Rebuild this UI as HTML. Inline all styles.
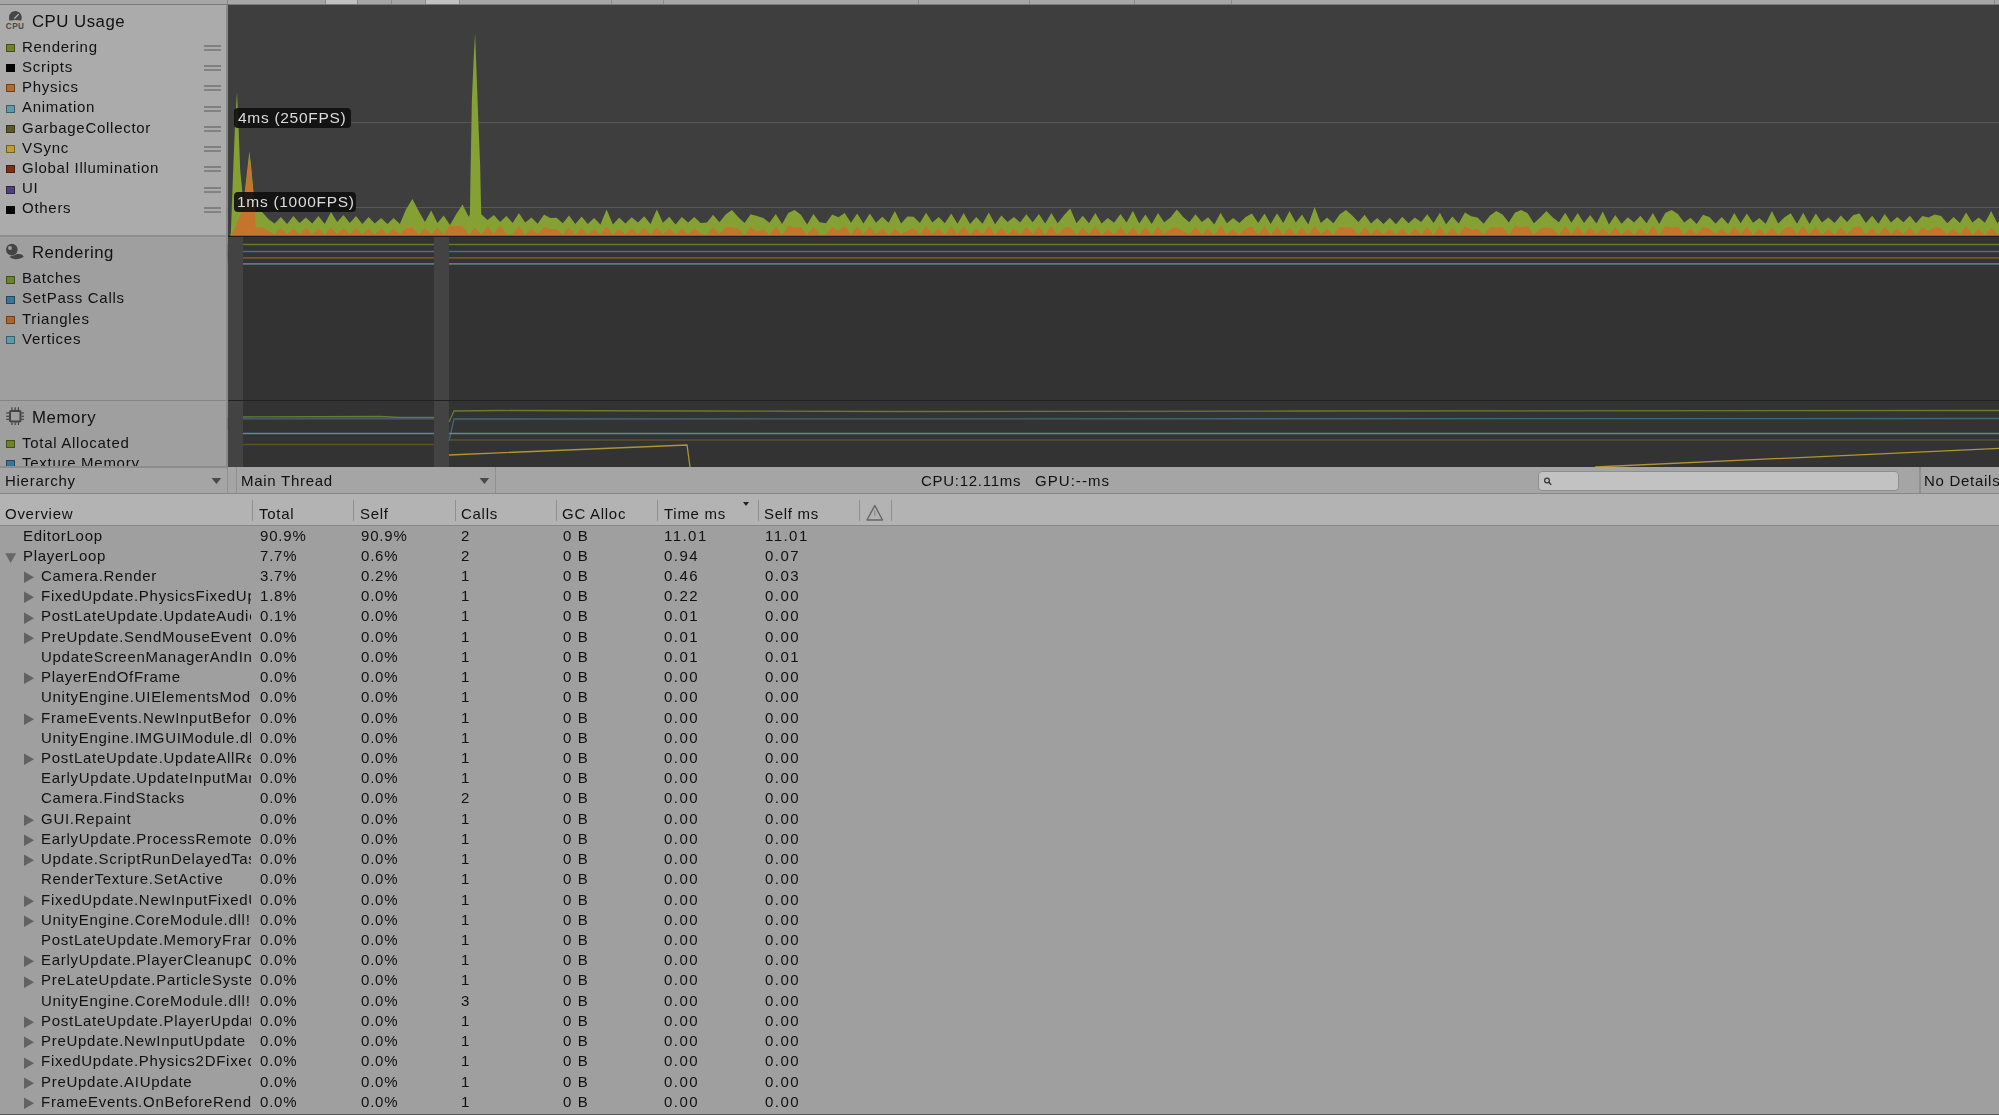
<!DOCTYPE html>
<html><head><meta charset="utf-8"><style>
html,body{margin:0;padding:0;}
body{width:1999px;height:1115px;overflow:hidden;position:relative;background:#9f9f9f;font-family:"Liberation Sans",sans-serif;}
.t{position:absolute;white-space:nowrap;line-height:20px;will-change:transform;}
</style></head><body>
<div style="position:absolute;left:0;top:0;width:1999px;height:4px;background:#a6a6a6"></div>
<div style="position:absolute;left:325px;top:0;width:32px;height:4px;background:#c2c2c2"></div>
<div style="position:absolute;left:425px;top:0;width:34px;height:4px;background:#c2c2c2"></div>
<div style="position:absolute;left:227px;top:0;width:1px;height:4px;background:#8a8a8a"></div>
<div style="position:absolute;left:325px;top:0;width:1px;height:4px;background:#8a8a8a"></div>
<div style="position:absolute;left:357px;top:0;width:1px;height:4px;background:#8a8a8a"></div>
<div style="position:absolute;left:391px;top:0;width:1px;height:4px;background:#8a8a8a"></div>
<div style="position:absolute;left:425px;top:0;width:1px;height:4px;background:#8a8a8a"></div>
<div style="position:absolute;left:459px;top:0;width:1px;height:4px;background:#8a8a8a"></div>
<div style="position:absolute;left:611px;top:0;width:1px;height:4px;background:#8a8a8a"></div>
<div style="position:absolute;left:663px;top:0;width:1px;height:4px;background:#8a8a8a"></div>
<div style="position:absolute;left:918px;top:0;width:1px;height:4px;background:#8a8a8a"></div>
<div style="position:absolute;left:1029px;top:0;width:1px;height:4px;background:#8a8a8a"></div>
<div style="position:absolute;left:1134px;top:0;width:1px;height:4px;background:#8a8a8a"></div>
<div style="position:absolute;left:1231px;top:0;width:1px;height:4px;background:#8a8a8a"></div>
<div style="position:absolute;left:1994px;top:0;width:1px;height:4px;background:#8a8a8a"></div>
<div style="position:absolute;left:0;top:4px;width:1999px;height:1px;background:#7a7a7a"></div>
<div style="position:absolute;left:0;top:5px;width:227px;height:231px;background:#ababab"></div>
<div style="position:absolute;left:0;top:235px;width:227px;height:2px;background:#8e8e8e"></div>
<div style="position:absolute;left:0;top:237px;width:227px;height:163px;background:#9f9f9f"></div>
<div style="position:absolute;left:0;top:400px;width:227px;height:1px;background:#858585"></div>
<div style="position:absolute;left:0;top:401px;width:227px;height:66px;background:#9f9f9f"></div>
<div style="position:absolute;left:226px;top:5px;width:2px;height:462px;background:#8a8a8a"></div>
<svg style="position:absolute;left:0;top:0px" width="30" height="30" viewBox="0 0 30 30">
<path d="M9.6 16.2 A6.2 6.2 0 0 1 21.4 16.2 Q21.6 18.2 21 20.6 Q15.3 19.6 9.6 20.6 Q9 18.2 9.6 16.2 Z" fill="#464646"/>
<path d="M9.1 17.2 A6.2 6.2 0 0 1 21.5 17.2 L21.3 20.3 Q15.3 19.2 9.3 20.3 Z" fill="#464646"/>
<line x1="14.7" y1="18.3" x2="18.4" y2="14.4" stroke="#b0b0b0" stroke-width="1.3" stroke-linecap="round"/>
<text x="15.1" y="28.7" font-family="Liberation Sans" font-weight="bold" font-size="8.2" fill="#484848" text-anchor="middle" letter-spacing="0.4">CPU</text>
</svg>
<svg style="position:absolute;left:0;top:238px" width="30" height="30" viewBox="0 0 30 30">
<circle cx="11.8" cy="11.6" r="5.8" fill="#444"/>
<circle cx="10" cy="10" r="2" fill="#9c9c9c"/>
<path d="M9.2 18.8 Q14 17.6 17 16.1 Q22.6 15.4 23.8 18.8 Q20 21.6 15 21.2 Q11 20.7 9.2 18.8 Z" fill="#444"/>
</svg>
<svg style="position:absolute;left:0;top:400px" width="30" height="30" viewBox="0 0 30 30">
<rect x="10" y="11" width="10.5" height="10.5" rx="1" fill="none" stroke="#444" stroke-width="2"/>
<g stroke="#444" stroke-width="1.2">
<line x1="12" y1="7.2" x2="12" y2="10"/><line x1="15.2" y1="7.2" x2="15.2" y2="10"/><line x1="18.4" y1="7.2" x2="18.4" y2="10"/>
<line x1="12" y1="22.5" x2="12" y2="25"/><line x1="15.2" y1="22.5" x2="15.2" y2="25"/><line x1="18.4" y1="22.5" x2="18.4" y2="25"/>
<line x1="6.2" y1="13" x2="9" y2="13"/><line x1="6.2" y1="16.3" x2="9" y2="16.3"/><line x1="6.2" y1="19.3" x2="9" y2="19.3"/>
<line x1="21.5" y1="13" x2="24" y2="13"/><line x1="21.5" y1="16.3" x2="24" y2="16.3"/><line x1="21.5" y1="19.3" x2="24" y2="19.3"/>
</g></svg>
<div class="t" style="left:31.5px;top:12.08px;font-size:16.8px;letter-spacing:0.5px;color:#111;">CPU Usage</div>
<div class="t" style="left:31.5px;top:243.38px;font-size:16.8px;letter-spacing:0.5px;color:#111;">Rendering</div>
<div class="t" style="left:31.5px;top:407.78px;font-size:16.8px;letter-spacing:0.6px;color:#111;">Memory</div>
<div style="position:absolute;left:6px;top:44.0px;width:9px;height:8px;background:#6e822a;box-shadow:inset 0 0 0 1px rgba(0,0,0,0.38)"></div>
<div class="t" style="left:22px;top:36.70px;font-size:15.0px;letter-spacing:0.72px;color:#111;">Rendering</div>
<div style="position:absolute;left:204px;top:45px;width:17px;height:2px;background:#808080"></div>
<div style="position:absolute;left:204px;top:49px;width:17px;height:2px;background:#828282"></div>
<div style="position:absolute;left:6px;top:64.2px;width:9px;height:8px;background:#050505;box-shadow:inset 0 0 0 1px rgba(0,0,0,0.38)"></div>
<div class="t" style="left:22px;top:56.92px;font-size:15.0px;letter-spacing:0.72px;color:#111;">Scripts</div>
<div style="position:absolute;left:204px;top:65px;width:17px;height:2px;background:#808080"></div>
<div style="position:absolute;left:204px;top:69px;width:17px;height:2px;background:#828282"></div>
<div style="position:absolute;left:6px;top:84.4px;width:9px;height:8px;background:#b46a28;box-shadow:inset 0 0 0 1px rgba(0,0,0,0.38)"></div>
<div class="t" style="left:22px;top:77.14px;font-size:15.0px;letter-spacing:0.72px;color:#111;">Physics</div>
<div style="position:absolute;left:204px;top:85px;width:17px;height:2px;background:#808080"></div>
<div style="position:absolute;left:204px;top:89px;width:17px;height:2px;background:#828282"></div>
<div style="position:absolute;left:6px;top:104.7px;width:9px;height:8px;background:#5c9ca8;box-shadow:inset 0 0 0 1px rgba(0,0,0,0.38)"></div>
<div class="t" style="left:22px;top:97.36px;font-size:15.0px;letter-spacing:0.72px;color:#111;">Animation</div>
<div style="position:absolute;left:204px;top:106px;width:17px;height:2px;background:#808080"></div>
<div style="position:absolute;left:204px;top:110px;width:17px;height:2px;background:#828282"></div>
<div style="position:absolute;left:6px;top:124.9px;width:9px;height:8px;background:#5e5624;box-shadow:inset 0 0 0 1px rgba(0,0,0,0.38)"></div>
<div class="t" style="left:22px;top:117.58px;font-size:15.0px;letter-spacing:0.72px;color:#111;">GarbageCollector</div>
<div style="position:absolute;left:204px;top:126px;width:17px;height:2px;background:#808080"></div>
<div style="position:absolute;left:204px;top:130px;width:17px;height:2px;background:#828282"></div>
<div style="position:absolute;left:6px;top:145.1px;width:9px;height:8px;background:#bb9c36;box-shadow:inset 0 0 0 1px rgba(0,0,0,0.38)"></div>
<div class="t" style="left:22px;top:137.80px;font-size:15.0px;letter-spacing:0.72px;color:#111;">VSync</div>
<div style="position:absolute;left:204px;top:146px;width:17px;height:2px;background:#808080"></div>
<div style="position:absolute;left:204px;top:150px;width:17px;height:2px;background:#828282"></div>
<div style="position:absolute;left:6px;top:165.3px;width:9px;height:8px;background:#7c2f12;box-shadow:inset 0 0 0 1px rgba(0,0,0,0.38)"></div>
<div class="t" style="left:22px;top:158.02px;font-size:15.0px;letter-spacing:0.72px;color:#111;">Global Illumination</div>
<div style="position:absolute;left:204px;top:166px;width:17px;height:2px;background:#808080"></div>
<div style="position:absolute;left:204px;top:170px;width:17px;height:2px;background:#828282"></div>
<div style="position:absolute;left:6px;top:185.5px;width:9px;height:8px;background:#503f7a;box-shadow:inset 0 0 0 1px rgba(0,0,0,0.38)"></div>
<div class="t" style="left:22px;top:178.24px;font-size:15.0px;letter-spacing:0.72px;color:#111;">UI</div>
<div style="position:absolute;left:204px;top:187px;width:17px;height:2px;background:#808080"></div>
<div style="position:absolute;left:204px;top:191px;width:17px;height:2px;background:#828282"></div>
<div style="position:absolute;left:6px;top:205.8px;width:9px;height:8px;background:#050505;box-shadow:inset 0 0 0 1px rgba(0,0,0,0.38)"></div>
<div class="t" style="left:22px;top:198.46px;font-size:15.0px;letter-spacing:0.72px;color:#111;">Others</div>
<div style="position:absolute;left:204px;top:207px;width:17px;height:2px;background:#808080"></div>
<div style="position:absolute;left:204px;top:211px;width:17px;height:2px;background:#828282"></div>
<div style="position:absolute;left:6px;top:275.6px;width:9px;height:8px;background:#6e822a;box-shadow:inset 0 0 0 1px rgba(0,0,0,0.38)"></div>
<div class="t" style="left:22px;top:268.30px;font-size:15.0px;letter-spacing:0.72px;color:#111;">Batches</div>
<div style="position:absolute;left:6px;top:295.7px;width:9px;height:8px;background:#3b7596;box-shadow:inset 0 0 0 1px rgba(0,0,0,0.38)"></div>
<div class="t" style="left:22px;top:288.40px;font-size:15.0px;letter-spacing:0.72px;color:#111;">SetPass Calls</div>
<div style="position:absolute;left:6px;top:315.8px;width:9px;height:8px;background:#b06626;box-shadow:inset 0 0 0 1px rgba(0,0,0,0.38)"></div>
<div class="t" style="left:22px;top:308.50px;font-size:15.0px;letter-spacing:0.72px;color:#111;">Triangles</div>
<div style="position:absolute;left:6px;top:335.9px;width:9px;height:8px;background:#5c9ca8;box-shadow:inset 0 0 0 1px rgba(0,0,0,0.38)"></div>
<div class="t" style="left:22px;top:328.60px;font-size:15.0px;letter-spacing:0.72px;color:#111;">Vertices</div>
<div style="position:absolute;left:0;top:401px;width:227px;height:66px;overflow:hidden">
<div style="position:absolute;left:6px;top:39.1px;width:9px;height:8px;background:#6e822a;box-shadow:inset 0 0 0 1px rgba(0,0,0,0.38)"></div>
<div class="t" style="left:22px;top:31.80px;font-size:15.0px;letter-spacing:0.72px;color:#111;">Total Allocated</div>
<div style="position:absolute;left:6px;top:59.3px;width:9px;height:8px;background:#3b7596;box-shadow:inset 0 0 0 1px rgba(0,0,0,0.38)"></div>
<div class="t" style="left:22px;top:52.00px;font-size:15.0px;letter-spacing:0.72px;color:#111;">Texture Memory</div>
</div>
<div style="position:absolute;left:226.6px;top:244px;width:1px;height:7px;background:#6e822a;opacity:0.6"></div>
<div style="position:absolute;left:226.6px;top:251px;width:1px;height:7px;background:#3b7596;opacity:0.6"></div>
<div style="position:absolute;left:226.6px;top:258px;width:1px;height:6px;background:#b06626;opacity:0.6"></div>
<div style="position:absolute;left:226.6px;top:264px;width:1px;height:8px;background:#5c9ca8;opacity:0.6"></div>
<div style="position:absolute;left:226.6px;top:417px;width:1px;height:13px;background:#6e822a;opacity:0.6"></div>
<div style="position:absolute;left:226.6px;top:430px;width:1px;height:13px;background:#5c9ca8;opacity:0.6"></div>
<div style="position:absolute;left:228px;top:5px;width:1771px;height:231px;background:#3e3e3e"></div>
<div style="position:absolute;left:228px;top:237px;width:1771px;height:163px;background:#333"></div>
<div style="position:absolute;left:228px;top:401px;width:1771px;height:66px;background:#333"></div>
<div style="position:absolute;left:228px;top:237px;width:15px;height:230px;background:#434343"></div>
<div style="position:absolute;left:434px;top:237px;width:15px;height:230px;background:#434343"></div>
<div style="position:absolute;left:228px;top:400px;width:1771px;height:1px;background:#222"></div>
<div style="position:absolute;left:228px;top:235px;width:1771px;height:2px;background:#1c1f22"></div>
<svg style="position:absolute;left:0;top:0" width="1999" height="240" viewBox="0 0 1999 240">
<line x1="240" y1="122.5" x2="1999" y2="122.5" stroke="#585858" stroke-width="1"/>
<line x1="240" y1="207.5" x2="1999" y2="207.5" stroke="#585858" stroke-width="1"/>
<polygon points="229.0,235.5 230.8,234.0 233.0,175.0 235.2,120.0 237.0,92.0 238.6,128.0 240.2,170.0 241.8,186.0 243.2,203.0 245.0,190.0 247.2,170.0 249.4,151.0 251.0,165.0 253.5,192.0 255.4,208.0 255.8,212.0 262.1,212.0 268.3,219.0 274.6,223.5 280.9,217.0 287.1,224.0 293.4,216.0 299.6,223.0 305.9,217.5 312.2,223.5 318.4,216.0 324.7,224.0 331.0,212.0 337.2,222.0 343.5,215.0 349.8,223.0 356.0,216.0 362.3,224.0 368.6,217.0 374.8,223.5 381.1,218.0 387.4,224.0 393.6,218.0 399.9,224.0 406.2,209.0 412.4,199.0 418.7,211.0 424.9,222.0 431.2,210.5 437.5,223.0 443.7,215.5 450.0,225.0 456.3,214.0 462.5,204.5 468.8,217.0 469.9,214.0 470.6,170.0 471.9,100.0 473.6,60.0 475.1,33.0 476.8,79.0 478.3,120.0 480.1,164.0 480.9,200.0 481.3,214.3 487.6,220.0 493.9,215.0 500.1,222.0 506.4,216.0 512.7,223.0 518.9,212.9 525.2,222.5 531.5,217.5 537.7,223.7 544.0,214.4 550.2,218.1 556.5,217.8 562.8,223.3 569.0,215.5 575.3,224.1 581.6,216.4 587.8,224.1 594.1,218.0 600.4,224.5 606.6,209.6 612.9,224.4 619.2,217.4 625.4,223.4 631.7,217.3 638.0,222.5 644.2,216.3 650.5,224.1 656.8,209.6 663.0,222.7 669.3,216.7 675.5,224.4 681.8,217.0 688.1,222.6 694.3,216.9 700.6,223.1 706.9,222.6 713.1,214.7 719.4,222.2 725.7,214.6 731.9,210.0 738.2,217.0 744.5,222.9 750.7,214.2 757.0,216.1 763.3,217.9 769.5,222.8 775.8,213.9 782.1,224.0 788.3,213.0 794.6,210.0 800.9,214.8 807.1,224.5 813.4,214.0 819.6,222.2 825.9,223.2 832.2,214.6 838.4,217.2 844.7,213.0 851.0,222.8 857.2,213.6 863.5,223.5 869.8,213.4 876.0,222.7 882.3,216.8 888.6,222.8 894.8,211.1 901.1,223.4 907.4,216.5 913.6,216.7 919.9,223.1 926.1,212.7 932.4,222.4 938.7,217.0 944.9,223.3 951.2,213.6 957.5,223.8 963.7,213.0 970.0,224.0 976.3,216.9 982.5,223.8 988.8,212.6 995.1,224.3 1001.3,215.6 1007.6,222.1 1013.9,217.0 1020.1,222.4 1026.4,214.2 1032.7,222.2 1038.9,214.0 1045.2,223.4 1051.4,213.0 1057.7,223.3 1064.0,215.2 1070.2,208.5 1076.5,223.2 1082.8,215.7 1089.0,223.2 1095.3,213.0 1101.6,223.5 1107.8,217.9 1114.1,222.8 1120.4,214.0 1126.6,222.5 1132.9,210.8 1139.2,223.6 1145.4,214.6 1151.7,224.0 1158.0,212.9 1164.2,222.3 1170.5,217.5 1176.8,209.5 1183.0,216.8 1189.3,222.3 1195.5,214.2 1201.8,222.1 1208.1,217.2 1214.3,224.5 1220.6,212.8 1226.9,223.2 1233.1,217.9 1239.4,223.1 1245.7,217.1 1251.9,213.6 1258.2,223.0 1264.5,213.6 1270.7,223.9 1277.0,213.2 1283.3,223.0 1289.5,211.0 1295.8,222.6 1302.0,214.4 1308.3,224.5 1314.6,207.1 1320.8,223.0 1327.1,217.5 1333.4,223.3 1339.6,214.5 1345.9,210.0 1352.2,215.4 1358.4,222.1 1364.7,214.7 1371.0,223.4 1377.2,217.9 1383.5,223.9 1389.8,217.7 1396.0,224.3 1402.3,216.7 1408.6,223.2 1414.8,217.4 1421.1,222.1 1427.3,214.3 1433.6,223.0 1439.9,212.8 1446.1,224.2 1452.4,216.5 1458.7,223.6 1464.9,212.6 1471.2,216.2 1477.5,217.4 1483.7,223.7 1490.0,215.4 1496.3,211.0 1502.5,214.6 1508.8,222.6 1515.1,212.6 1521.3,210.0 1527.6,213.2 1533.9,223.2 1540.1,217.6 1546.4,211.0 1552.6,217.2 1558.9,222.3 1565.2,212.8 1571.4,222.8 1577.7,213.1 1584.0,222.9 1590.2,214.9 1596.5,223.4 1602.8,211.4 1609.0,224.4 1615.3,215.0 1621.6,223.8 1627.8,217.2 1634.1,222.6 1640.4,215.8 1646.6,223.2 1652.9,213.0 1659.2,224.1 1665.4,212.7 1671.7,210.0 1677.9,213.9 1684.2,222.5 1690.5,217.7 1696.7,223.9 1703.0,214.8 1709.3,217.0 1715.5,223.5 1721.8,217.1 1728.1,224.0 1734.3,213.0 1740.6,223.2 1746.9,213.6 1753.1,222.7 1759.4,217.9 1765.7,223.8 1771.9,211.0 1778.2,223.6 1784.5,217.2 1790.7,213.3 1797.0,223.8 1803.2,212.7 1809.5,224.0 1815.8,213.5 1822.0,222.4 1828.3,217.6 1834.6,222.9 1840.8,215.5 1847.1,222.0 1853.4,214.9 1859.6,213.6 1865.9,222.9 1872.2,215.8 1878.4,223.8 1884.7,214.0 1891.0,222.4 1897.2,217.0 1903.5,222.2 1909.8,215.8 1916.0,223.3 1922.3,215.9 1928.5,217.6 1934.8,214.4 1941.1,216.1 1947.3,223.3 1953.6,217.1 1959.9,222.9 1966.1,212.6 1972.4,222.5 1978.7,217.5 1984.9,222.8 1991.2,211.0 1997.5,223.4 2003.7,213.0 2006.0,235.5" fill="#85a033"/>
<polygon points="231.2,235.5 236.0,226.0 240.0,216.0 243.0,206.0 246.0,186.0 248.3,166.0 249.4,154.6 251.0,168.0 253.6,196.0 255.2,214.0 255.6,227.8 262.1,227.0 268.3,231.0 274.6,234.5 280.9,228.0 287.1,234.5 293.4,228.5 299.6,234.5 305.9,228.0 312.2,234.5 318.4,228.5 324.7,234.5 331.0,227.7 337.2,234.5 343.5,228.0 349.8,234.5 356.0,228.0 362.3,234.5 368.6,228.5 374.8,234.5 381.1,228.5 387.4,234.5 393.6,228.5 399.9,234.5 406.2,228.0 412.4,227.7 418.7,234.5 424.9,228.0 431.2,234.5 437.5,228.0 443.7,234.5 450.0,226.0 456.3,226.0 462.5,226.5 468.8,234.5 475.1,227.7 481.3,234.5 487.6,226.4 493.9,234.0 500.1,225.8 506.4,234.5 512.7,234.5 518.9,226.0 525.2,234.6 531.5,228.7 537.7,234.1 544.0,226.9 550.2,229.2 556.5,228.9 562.8,234.8 569.0,227.5 575.3,234.8 581.6,228.1 587.8,234.5 594.1,229.0 600.4,234.5 606.6,226.5 612.9,234.9 619.2,228.7 625.4,234.5 631.7,228.6 638.0,234.3 644.2,228.0 650.5,234.8 656.8,227.5 663.0,234.1 669.3,228.2 675.5,234.6 681.8,228.4 688.1,234.2 694.3,228.4 700.6,234.1 706.9,234.8 713.1,227.1 719.4,234.3 725.7,227.0 731.9,227.5 738.2,228.4 744.5,235.1 750.7,226.8 757.0,231.7 763.3,228.9 769.5,235.2 775.8,226.6 782.1,235.1 788.3,226.1 794.6,227.5 800.9,227.1 807.1,235.1 813.4,226.6 819.6,234.9 825.9,234.3 832.2,227.0 838.4,231.0 844.7,226.1 851.0,234.8 857.2,226.4 863.5,234.4 869.8,226.3 876.0,234.2 882.3,228.3 888.6,235.0 894.8,228.8 901.1,234.4 907.4,230.4 913.6,228.2 919.9,234.8 926.1,225.9 932.4,234.0 938.7,228.4 944.9,234.7 951.2,226.5 957.5,234.2 963.7,226.1 970.0,235.1 976.3,228.3 982.5,234.3 988.8,225.9 995.1,235.0 1001.3,227.6 1007.6,235.0 1013.9,228.4 1020.1,234.6 1026.4,226.8 1032.7,234.3 1038.9,226.7 1045.2,234.4 1051.4,226.1 1057.7,234.7 1064.0,227.4 1070.2,227.3 1076.5,234.8 1082.8,227.7 1089.0,234.2 1095.3,226.1 1101.6,235.1 1107.8,228.9 1114.1,234.4 1120.4,226.7 1126.6,234.6 1132.9,227.5 1139.2,234.8 1145.4,227.0 1151.7,235.1 1158.0,226.0 1164.2,234.3 1170.5,228.7 1176.8,227.5 1183.0,231.0 1189.3,234.6 1195.5,226.8 1201.8,234.7 1208.1,228.5 1214.3,235.1 1220.6,226.0 1226.9,234.6 1233.1,229.0 1239.4,234.9 1245.7,228.5 1251.9,226.4 1258.2,234.7 1264.5,226.4 1270.7,235.0 1277.0,226.2 1283.3,234.9 1289.5,227.5 1295.8,235.1 1302.0,226.9 1308.3,234.8 1314.6,225.9 1320.8,234.1 1327.1,228.7 1333.4,235.2 1339.6,227.0 1345.9,227.5 1352.2,227.5 1358.4,235.1 1364.7,227.1 1371.0,234.3 1377.2,229.0 1383.5,234.5 1389.8,228.8 1396.0,234.5 1402.3,228.2 1408.6,235.2 1414.8,228.6 1421.1,234.6 1427.3,226.9 1433.6,234.9 1439.9,226.0 1446.1,234.9 1452.4,228.1 1458.7,234.9 1464.9,225.9 1471.2,229.8 1477.5,228.7 1483.7,234.7 1490.0,227.5 1496.3,227.5 1502.5,227.0 1508.8,235.0 1515.1,225.8 1521.3,227.5 1527.6,226.2 1533.9,234.8 1540.1,228.8 1546.4,227.5 1552.6,228.5 1558.9,234.9 1565.2,226.0 1571.4,234.4 1577.7,226.1 1584.0,234.5 1590.2,227.2 1596.5,234.2 1602.8,228.1 1609.0,234.8 1615.3,227.3 1621.6,235.1 1627.8,228.5 1634.1,234.9 1640.4,227.7 1646.6,234.6 1652.9,226.1 1659.2,235.0 1665.4,225.9 1671.7,227.5 1677.9,226.6 1684.2,234.5 1690.5,228.8 1696.7,234.2 1703.0,227.1 1709.3,228.4 1715.5,234.3 1721.8,228.4 1728.1,234.6 1734.3,226.1 1740.6,234.3 1746.9,226.4 1753.1,235.2 1759.4,229.0 1765.7,234.7 1771.9,227.5 1778.2,235.2 1784.5,228.5 1790.7,226.3 1797.0,234.1 1803.2,225.9 1809.5,234.5 1815.8,226.4 1822.0,235.0 1828.3,228.8 1834.6,234.8 1840.8,227.5 1847.1,234.5 1853.4,227.2 1859.6,226.4 1865.9,234.6 1872.2,227.7 1878.4,234.4 1884.7,226.7 1891.0,234.1 1897.2,228.4 1903.5,234.3 1909.8,227.7 1916.0,234.8 1922.3,227.8 1928.5,231.1 1934.8,226.9 1941.1,227.9 1947.3,234.9 1953.6,228.5 1959.9,234.6 1966.1,225.8 1972.4,235.1 1978.7,228.7 1984.9,235.1 1991.2,227.5 1997.5,234.7 2003.7,226.1 2006.0,235.5" fill="#c4742c"/>
</svg>
<div style="position:absolute;left:234px;top:108px;width:117px;height:20px;background:rgba(14,14,14,0.9);border-radius:4px"></div>
<div class="t" style="left:238px;top:107.63px;font-size:15.5px;letter-spacing:0.7px;color:#dcdcdc;">4ms (250FPS)</div>
<div style="position:absolute;left:234px;top:192px;width:122px;height:20px;background:rgba(14,14,14,0.9);border-radius:4px"></div>
<div class="t" style="left:237px;top:191.63px;font-size:15.5px;letter-spacing:0.7px;color:#dcdcdc;">1ms (1000FPS)</div>
<svg style="position:absolute;left:0;top:236px" width="1999" height="232" viewBox="0 236 1999 232">
<g stroke-width="1.7">
<line x1="243" y1="244.5" x2="434" y2="244.5" stroke="#667a2a"/><line x1="449" y1="244.5" x2="1999" y2="244.5" stroke="#667a2a"/>
<line x1="243" y1="251.5" x2="434" y2="251.5" stroke="#466f88"/><line x1="449" y1="251.5" x2="1999" y2="251.5" stroke="#466f88"/>
<line x1="243" y1="257.8" x2="434" y2="257.8" stroke="#7c5228"/><line x1="449" y1="257.8" x2="1999" y2="257.8" stroke="#7c5228"/>
<line x1="243" y1="263.8" x2="434" y2="263.8" stroke="#557f86"/><line x1="449" y1="263.8" x2="1999" y2="263.8" stroke="#557f86"/>
</g>
<g stroke-width="1.3" fill="none">
<polyline points="243,417 380,416.5 400,417.5 434,417.5" stroke="#687c2c"/>
<polyline points="449,422 454,411 500,410.5 700,411 900,411.5 1300,411 1999,410.5" stroke="#687c2c"/>
<line x1="243" y1="418.8" x2="434" y2="418.8" stroke="#40687c"/>
<polyline points="449,441 454,419 1999,418.5" stroke="#40687c"/>
<line x1="243" y1="433.5" x2="434" y2="433.5" stroke="#5a8c94"/><line x1="449" y1="433.5" x2="1999" y2="433.5" stroke="#5a8c94"/>
<line x1="243" y1="444.5" x2="434" y2="444.5" stroke="#5c5228"/><line x1="449" y1="440" x2="1999" y2="440" stroke="#5c5228"/>
<polyline points="449,455 687,445 690,467" stroke="#b0962f"/>
<polyline points="1595,467 1999,448.3" stroke="#b0962f"/>
</g></svg>
<div style="position:absolute;left:0;top:467px;width:1999px;height:26px;background:#a5a5a5"></div>
<div style="position:absolute;left:0;top:493px;width:1999px;height:1px;background:#888"></div>
<div style="position:absolute;left:0;top:466px;width:227px;height:1.5px;background:#8c8c8c"></div>
<div style="position:absolute;left:226.6px;top:467px;width:1.6px;height:26px;background:#909090"></div>
<div style="position:absolute;left:235.5px;top:467px;width:1.6px;height:26px;background:#909090"></div>
<div style="position:absolute;left:494.5px;top:467px;width:1.6px;height:26px;background:#909090"></div>
<div style="position:absolute;left:1919px;top:467px;width:1.6px;height:26px;background:#909090"></div>
<div class="t" style="left:5px;top:471.30px;font-size:15.0px;letter-spacing:0.72px;color:#111;">Hierarchy</div>
<div class="t" style="left:241px;top:471.30px;font-size:15.0px;letter-spacing:0.72px;color:#111;">Main Thread</div>
<div class="t" style="left:921px;top:471.30px;font-size:15.0px;letter-spacing:0.72px;color:#111;">CPU:12.11ms</div>
<div class="t" style="left:1035px;top:471.30px;font-size:15.0px;letter-spacing:1.05px;color:#111;">GPU:--ms</div>
<div class="t" style="left:1924px;top:471.30px;font-size:15.0px;letter-spacing:0.72px;color:#111;">No Details</div>
<svg style="position:absolute;left:210.5px;top:477px" width="12" height="8"><path d="M0.6 0.9 L10.2 0.9 L5.4 7 Z" fill="#4a4a4a"/></svg>
<svg style="position:absolute;left:478.5px;top:477px" width="12" height="8"><path d="M0.6 0.9 L10.2 0.9 L5.4 7 Z" fill="#4a4a4a"/></svg>
<div style="position:absolute;left:1538px;top:471px;width:359px;height:18px;background:#c2c2c2;border:1px solid #8e8e8e;border-radius:4px"></div>
<svg style="position:absolute;left:1541px;top:474px" width="14" height="14"><circle cx="6" cy="6.5" r="2.4" fill="none" stroke="#333" stroke-width="1.2"/><line x1="7.8" y1="8.3" x2="10.2" y2="10.8" stroke="#333" stroke-width="1.3"/></svg>
<div style="position:absolute;left:0;top:494px;width:1999px;height:31px;background:#b3b3b3"></div>
<div style="position:absolute;left:0;top:525px;width:1999px;height:1px;background:#878787"></div>
<div style="position:absolute;left:252px;top:500px;width:1px;height:21px;background:#8e8e8e"></div>
<div style="position:absolute;left:353px;top:500px;width:1px;height:21px;background:#8e8e8e"></div>
<div style="position:absolute;left:455px;top:500px;width:1px;height:21px;background:#8e8e8e"></div>
<div style="position:absolute;left:556px;top:500px;width:1px;height:21px;background:#8e8e8e"></div>
<div style="position:absolute;left:657px;top:500px;width:1px;height:21px;background:#8e8e8e"></div>
<div style="position:absolute;left:758px;top:500px;width:1px;height:21px;background:#8e8e8e"></div>
<div style="position:absolute;left:859px;top:500px;width:1px;height:21px;background:#8e8e8e"></div>
<div style="position:absolute;left:891px;top:500px;width:1px;height:21px;background:#8e8e8e"></div>
<div class="t" style="left:5px;top:503.80px;font-size:15.0px;letter-spacing:0.72px;color:#111;">Overview</div>
<div class="t" style="left:259px;top:503.80px;font-size:15.0px;letter-spacing:0.72px;color:#111;">Total</div>
<div class="t" style="left:360px;top:503.80px;font-size:15.0px;letter-spacing:0.72px;color:#111;">Self</div>
<div class="t" style="left:461px;top:503.80px;font-size:15.0px;letter-spacing:0.72px;color:#111;">Calls</div>
<div class="t" style="left:562px;top:503.80px;font-size:15.0px;letter-spacing:0.72px;color:#111;">GC Alloc</div>
<div class="t" style="left:664px;top:503.80px;font-size:15.0px;letter-spacing:0.72px;color:#111;">Time ms</div>
<div class="t" style="left:764px;top:503.80px;font-size:15.0px;letter-spacing:0.72px;color:#111;">Self ms</div>
<svg style="position:absolute;left:742px;top:501px" width="8" height="6"><path d="M1 1 L7 1 L4 5 Z" fill="#222"/></svg>
<svg style="position:absolute;left:864px;top:503px" width="22" height="20"><path d="M10.8 2.5 L18.5 17 L3 17 Z" fill="none" stroke="#666" stroke-width="1.4" stroke-linejoin="round"/><line x1="10.8" y1="7.5" x2="10.8" y2="12.5" stroke="#888" stroke-width="1.3"/></svg>
<div style="position:absolute;left:0;top:526px;width:1999px;height:589px;background:#9f9f9f"></div>
<div style="position:absolute;left:23px;top:525.80px;width:228px;height:20px;overflow:hidden"><div class="t" style="left:0px;top:-0.20px;font-size:15.0px;letter-spacing:0.72px;color:#111;">EditorLoop</div></div>
<div class="t" style="left:259.5px;top:525.60px;font-size:15.0px;letter-spacing:0.8px;color:#111;">90.9%</div>
<div class="t" style="left:360.5px;top:525.60px;font-size:15.0px;letter-spacing:0.8px;color:#111;">90.9%</div>
<div class="t" style="left:461px;top:525.60px;font-size:15.0px;letter-spacing:0.72px;color:#111;">2</div>
<div class="t" style="left:562.8px;top:525.60px;font-size:15.0px;letter-spacing:1.1px;color:#111;">0 B</div>
<div class="t" style="left:664.3px;top:525.60px;font-size:15.0px;letter-spacing:1.45px;color:#111;">11.01</div>
<div class="t" style="left:765.3px;top:525.60px;font-size:15.0px;letter-spacing:1.45px;color:#111;">11.01</div>
<div style="position:absolute;left:23px;top:546.02px;width:228px;height:20px;overflow:hidden"><div class="t" style="left:0px;top:-0.20px;font-size:15.0px;letter-spacing:0.72px;color:#111;">PlayerLoop</div></div>
<svg style="position:absolute;left:5px;top:552.52px" width="12" height="12"><path d="M0.2 0.3 L11.1 0.3 L5.65 10.1 Z" fill="#666"/></svg>
<div class="t" style="left:259.5px;top:545.82px;font-size:15.0px;letter-spacing:0.8px;color:#111;">7.7%</div>
<div class="t" style="left:360.5px;top:545.82px;font-size:15.0px;letter-spacing:0.8px;color:#111;">0.6%</div>
<div class="t" style="left:461px;top:545.82px;font-size:15.0px;letter-spacing:0.72px;color:#111;">2</div>
<div class="t" style="left:562.8px;top:545.82px;font-size:15.0px;letter-spacing:1.1px;color:#111;">0 B</div>
<div class="t" style="left:664.3px;top:545.82px;font-size:15.0px;letter-spacing:1.45px;color:#111;">0.94</div>
<div class="t" style="left:765.3px;top:545.82px;font-size:15.0px;letter-spacing:1.45px;color:#111;">0.07</div>
<div style="position:absolute;left:41px;top:566.24px;width:210px;height:20px;overflow:hidden"><div class="t" style="left:0px;top:-0.20px;font-size:15.0px;letter-spacing:0.72px;color:#111;">Camera.Render</div></div>
<svg style="position:absolute;left:24px;top:571.24px" width="12" height="13"><path d="M0 0.5 L10.1 6.25 L0 12 Z" fill="#626262"/></svg>
<div class="t" style="left:259.5px;top:566.04px;font-size:15.0px;letter-spacing:0.8px;color:#111;">3.7%</div>
<div class="t" style="left:360.5px;top:566.04px;font-size:15.0px;letter-spacing:0.8px;color:#111;">0.2%</div>
<div class="t" style="left:461px;top:566.04px;font-size:15.0px;letter-spacing:0.72px;color:#111;">1</div>
<div class="t" style="left:562.8px;top:566.04px;font-size:15.0px;letter-spacing:1.1px;color:#111;">0 B</div>
<div class="t" style="left:664.3px;top:566.04px;font-size:15.0px;letter-spacing:1.45px;color:#111;">0.46</div>
<div class="t" style="left:765.3px;top:566.04px;font-size:15.0px;letter-spacing:1.45px;color:#111;">0.03</div>
<div style="position:absolute;left:41px;top:586.46px;width:210px;height:20px;overflow:hidden"><div class="t" style="left:0px;top:-0.20px;font-size:15.0px;letter-spacing:0.72px;color:#111;">FixedUpdate.PhysicsFixedUpdate</div></div>
<svg style="position:absolute;left:24px;top:591.46px" width="12" height="13"><path d="M0 0.5 L10.1 6.25 L0 12 Z" fill="#626262"/></svg>
<div class="t" style="left:259.5px;top:586.26px;font-size:15.0px;letter-spacing:0.8px;color:#111;">1.8%</div>
<div class="t" style="left:360.5px;top:586.26px;font-size:15.0px;letter-spacing:0.8px;color:#111;">0.0%</div>
<div class="t" style="left:461px;top:586.26px;font-size:15.0px;letter-spacing:0.72px;color:#111;">1</div>
<div class="t" style="left:562.8px;top:586.26px;font-size:15.0px;letter-spacing:1.1px;color:#111;">0 B</div>
<div class="t" style="left:664.3px;top:586.26px;font-size:15.0px;letter-spacing:1.45px;color:#111;">0.22</div>
<div class="t" style="left:765.3px;top:586.26px;font-size:15.0px;letter-spacing:1.45px;color:#111;">0.00</div>
<div style="position:absolute;left:41px;top:606.68px;width:210px;height:20px;overflow:hidden"><div class="t" style="left:0px;top:-0.20px;font-size:15.0px;letter-spacing:0.72px;color:#111;">PostLateUpdate.UpdateAudio</div></div>
<svg style="position:absolute;left:24px;top:611.68px" width="12" height="13"><path d="M0 0.5 L10.1 6.25 L0 12 Z" fill="#626262"/></svg>
<div class="t" style="left:259.5px;top:606.48px;font-size:15.0px;letter-spacing:0.8px;color:#111;">0.1%</div>
<div class="t" style="left:360.5px;top:606.48px;font-size:15.0px;letter-spacing:0.8px;color:#111;">0.0%</div>
<div class="t" style="left:461px;top:606.48px;font-size:15.0px;letter-spacing:0.72px;color:#111;">1</div>
<div class="t" style="left:562.8px;top:606.48px;font-size:15.0px;letter-spacing:1.1px;color:#111;">0 B</div>
<div class="t" style="left:664.3px;top:606.48px;font-size:15.0px;letter-spacing:1.45px;color:#111;">0.01</div>
<div class="t" style="left:765.3px;top:606.48px;font-size:15.0px;letter-spacing:1.45px;color:#111;">0.00</div>
<div style="position:absolute;left:41px;top:626.90px;width:210px;height:20px;overflow:hidden"><div class="t" style="left:0px;top:-0.20px;font-size:15.0px;letter-spacing:0.72px;color:#111;">PreUpdate.SendMouseEvents</div></div>
<svg style="position:absolute;left:24px;top:631.90px" width="12" height="13"><path d="M0 0.5 L10.1 6.25 L0 12 Z" fill="#626262"/></svg>
<div class="t" style="left:259.5px;top:626.70px;font-size:15.0px;letter-spacing:0.8px;color:#111;">0.0%</div>
<div class="t" style="left:360.5px;top:626.70px;font-size:15.0px;letter-spacing:0.8px;color:#111;">0.0%</div>
<div class="t" style="left:461px;top:626.70px;font-size:15.0px;letter-spacing:0.72px;color:#111;">1</div>
<div class="t" style="left:562.8px;top:626.70px;font-size:15.0px;letter-spacing:1.1px;color:#111;">0 B</div>
<div class="t" style="left:664.3px;top:626.70px;font-size:15.0px;letter-spacing:1.45px;color:#111;">0.01</div>
<div class="t" style="left:765.3px;top:626.70px;font-size:15.0px;letter-spacing:1.45px;color:#111;">0.00</div>
<div style="position:absolute;left:41px;top:647.12px;width:210px;height:20px;overflow:hidden"><div class="t" style="left:0px;top:-0.20px;font-size:15.0px;letter-spacing:0.72px;color:#111;">UpdateScreenManagerAndInput</div></div>
<div class="t" style="left:259.5px;top:646.92px;font-size:15.0px;letter-spacing:0.8px;color:#111;">0.0%</div>
<div class="t" style="left:360.5px;top:646.92px;font-size:15.0px;letter-spacing:0.8px;color:#111;">0.0%</div>
<div class="t" style="left:461px;top:646.92px;font-size:15.0px;letter-spacing:0.72px;color:#111;">1</div>
<div class="t" style="left:562.8px;top:646.92px;font-size:15.0px;letter-spacing:1.1px;color:#111;">0 B</div>
<div class="t" style="left:664.3px;top:646.92px;font-size:15.0px;letter-spacing:1.45px;color:#111;">0.01</div>
<div class="t" style="left:765.3px;top:646.92px;font-size:15.0px;letter-spacing:1.45px;color:#111;">0.01</div>
<div style="position:absolute;left:41px;top:667.34px;width:210px;height:20px;overflow:hidden"><div class="t" style="left:0px;top:-0.20px;font-size:15.0px;letter-spacing:0.72px;color:#111;">PlayerEndOfFrame</div></div>
<svg style="position:absolute;left:24px;top:672.34px" width="12" height="13"><path d="M0 0.5 L10.1 6.25 L0 12 Z" fill="#626262"/></svg>
<div class="t" style="left:259.5px;top:667.14px;font-size:15.0px;letter-spacing:0.8px;color:#111;">0.0%</div>
<div class="t" style="left:360.5px;top:667.14px;font-size:15.0px;letter-spacing:0.8px;color:#111;">0.0%</div>
<div class="t" style="left:461px;top:667.14px;font-size:15.0px;letter-spacing:0.72px;color:#111;">1</div>
<div class="t" style="left:562.8px;top:667.14px;font-size:15.0px;letter-spacing:1.1px;color:#111;">0 B</div>
<div class="t" style="left:664.3px;top:667.14px;font-size:15.0px;letter-spacing:1.45px;color:#111;">0.00</div>
<div class="t" style="left:765.3px;top:667.14px;font-size:15.0px;letter-spacing:1.45px;color:#111;">0.00</div>
<div style="position:absolute;left:41px;top:687.56px;width:210px;height:20px;overflow:hidden"><div class="t" style="left:0px;top:-0.20px;font-size:15.0px;letter-spacing:0.72px;color:#111;">UnityEngine.UIElementsModule</div></div>
<div class="t" style="left:259.5px;top:687.36px;font-size:15.0px;letter-spacing:0.8px;color:#111;">0.0%</div>
<div class="t" style="left:360.5px;top:687.36px;font-size:15.0px;letter-spacing:0.8px;color:#111;">0.0%</div>
<div class="t" style="left:461px;top:687.36px;font-size:15.0px;letter-spacing:0.72px;color:#111;">1</div>
<div class="t" style="left:562.8px;top:687.36px;font-size:15.0px;letter-spacing:1.1px;color:#111;">0 B</div>
<div class="t" style="left:664.3px;top:687.36px;font-size:15.0px;letter-spacing:1.45px;color:#111;">0.00</div>
<div class="t" style="left:765.3px;top:687.36px;font-size:15.0px;letter-spacing:1.45px;color:#111;">0.00</div>
<div style="position:absolute;left:41px;top:707.78px;width:210px;height:20px;overflow:hidden"><div class="t" style="left:0px;top:-0.20px;font-size:15.0px;letter-spacing:0.72px;color:#111;">FrameEvents.NewInputBeforeRender</div></div>
<svg style="position:absolute;left:24px;top:712.78px" width="12" height="13"><path d="M0 0.5 L10.1 6.25 L0 12 Z" fill="#626262"/></svg>
<div class="t" style="left:259.5px;top:707.58px;font-size:15.0px;letter-spacing:0.8px;color:#111;">0.0%</div>
<div class="t" style="left:360.5px;top:707.58px;font-size:15.0px;letter-spacing:0.8px;color:#111;">0.0%</div>
<div class="t" style="left:461px;top:707.58px;font-size:15.0px;letter-spacing:0.72px;color:#111;">1</div>
<div class="t" style="left:562.8px;top:707.58px;font-size:15.0px;letter-spacing:1.1px;color:#111;">0 B</div>
<div class="t" style="left:664.3px;top:707.58px;font-size:15.0px;letter-spacing:1.45px;color:#111;">0.00</div>
<div class="t" style="left:765.3px;top:707.58px;font-size:15.0px;letter-spacing:1.45px;color:#111;">0.00</div>
<div style="position:absolute;left:41px;top:728.00px;width:210px;height:20px;overflow:hidden"><div class="t" style="left:0px;top:-0.20px;font-size:15.0px;letter-spacing:0.72px;color:#111;">UnityEngine.IMGUIModule.dll</div></div>
<div class="t" style="left:259.5px;top:727.80px;font-size:15.0px;letter-spacing:0.8px;color:#111;">0.0%</div>
<div class="t" style="left:360.5px;top:727.80px;font-size:15.0px;letter-spacing:0.8px;color:#111;">0.0%</div>
<div class="t" style="left:461px;top:727.80px;font-size:15.0px;letter-spacing:0.72px;color:#111;">1</div>
<div class="t" style="left:562.8px;top:727.80px;font-size:15.0px;letter-spacing:1.1px;color:#111;">0 B</div>
<div class="t" style="left:664.3px;top:727.80px;font-size:15.0px;letter-spacing:1.45px;color:#111;">0.00</div>
<div class="t" style="left:765.3px;top:727.80px;font-size:15.0px;letter-spacing:1.45px;color:#111;">0.00</div>
<div style="position:absolute;left:41px;top:748.22px;width:210px;height:20px;overflow:hidden"><div class="t" style="left:0px;top:-0.20px;font-size:15.0px;letter-spacing:0.72px;color:#111;">PostLateUpdate.UpdateAllRenderers</div></div>
<svg style="position:absolute;left:24px;top:753.22px" width="12" height="13"><path d="M0 0.5 L10.1 6.25 L0 12 Z" fill="#626262"/></svg>
<div class="t" style="left:259.5px;top:748.02px;font-size:15.0px;letter-spacing:0.8px;color:#111;">0.0%</div>
<div class="t" style="left:360.5px;top:748.02px;font-size:15.0px;letter-spacing:0.8px;color:#111;">0.0%</div>
<div class="t" style="left:461px;top:748.02px;font-size:15.0px;letter-spacing:0.72px;color:#111;">1</div>
<div class="t" style="left:562.8px;top:748.02px;font-size:15.0px;letter-spacing:1.1px;color:#111;">0 B</div>
<div class="t" style="left:664.3px;top:748.02px;font-size:15.0px;letter-spacing:1.45px;color:#111;">0.00</div>
<div class="t" style="left:765.3px;top:748.02px;font-size:15.0px;letter-spacing:1.45px;color:#111;">0.00</div>
<div style="position:absolute;left:41px;top:768.44px;width:210px;height:20px;overflow:hidden"><div class="t" style="left:0px;top:-0.20px;font-size:15.0px;letter-spacing:0.72px;color:#111;">EarlyUpdate.UpdateInputManager</div></div>
<div class="t" style="left:259.5px;top:768.24px;font-size:15.0px;letter-spacing:0.8px;color:#111;">0.0%</div>
<div class="t" style="left:360.5px;top:768.24px;font-size:15.0px;letter-spacing:0.8px;color:#111;">0.0%</div>
<div class="t" style="left:461px;top:768.24px;font-size:15.0px;letter-spacing:0.72px;color:#111;">1</div>
<div class="t" style="left:562.8px;top:768.24px;font-size:15.0px;letter-spacing:1.1px;color:#111;">0 B</div>
<div class="t" style="left:664.3px;top:768.24px;font-size:15.0px;letter-spacing:1.45px;color:#111;">0.00</div>
<div class="t" style="left:765.3px;top:768.24px;font-size:15.0px;letter-spacing:1.45px;color:#111;">0.00</div>
<div style="position:absolute;left:41px;top:788.66px;width:210px;height:20px;overflow:hidden"><div class="t" style="left:0px;top:-0.20px;font-size:15.0px;letter-spacing:0.72px;color:#111;">Camera.FindStacks</div></div>
<div class="t" style="left:259.5px;top:788.46px;font-size:15.0px;letter-spacing:0.8px;color:#111;">0.0%</div>
<div class="t" style="left:360.5px;top:788.46px;font-size:15.0px;letter-spacing:0.8px;color:#111;">0.0%</div>
<div class="t" style="left:461px;top:788.46px;font-size:15.0px;letter-spacing:0.72px;color:#111;">2</div>
<div class="t" style="left:562.8px;top:788.46px;font-size:15.0px;letter-spacing:1.1px;color:#111;">0 B</div>
<div class="t" style="left:664.3px;top:788.46px;font-size:15.0px;letter-spacing:1.45px;color:#111;">0.00</div>
<div class="t" style="left:765.3px;top:788.46px;font-size:15.0px;letter-spacing:1.45px;color:#111;">0.00</div>
<div style="position:absolute;left:41px;top:808.88px;width:210px;height:20px;overflow:hidden"><div class="t" style="left:0px;top:-0.20px;font-size:15.0px;letter-spacing:0.72px;color:#111;">GUI.Repaint</div></div>
<svg style="position:absolute;left:24px;top:813.88px" width="12" height="13"><path d="M0 0.5 L10.1 6.25 L0 12 Z" fill="#626262"/></svg>
<div class="t" style="left:259.5px;top:808.68px;font-size:15.0px;letter-spacing:0.8px;color:#111;">0.0%</div>
<div class="t" style="left:360.5px;top:808.68px;font-size:15.0px;letter-spacing:0.8px;color:#111;">0.0%</div>
<div class="t" style="left:461px;top:808.68px;font-size:15.0px;letter-spacing:0.72px;color:#111;">1</div>
<div class="t" style="left:562.8px;top:808.68px;font-size:15.0px;letter-spacing:1.1px;color:#111;">0 B</div>
<div class="t" style="left:664.3px;top:808.68px;font-size:15.0px;letter-spacing:1.45px;color:#111;">0.00</div>
<div class="t" style="left:765.3px;top:808.68px;font-size:15.0px;letter-spacing:1.45px;color:#111;">0.00</div>
<div style="position:absolute;left:41px;top:829.10px;width:210px;height:20px;overflow:hidden"><div class="t" style="left:0px;top:-0.20px;font-size:15.0px;letter-spacing:0.72px;color:#111;">EarlyUpdate.ProcessRemoteInput</div></div>
<svg style="position:absolute;left:24px;top:834.10px" width="12" height="13"><path d="M0 0.5 L10.1 6.25 L0 12 Z" fill="#626262"/></svg>
<div class="t" style="left:259.5px;top:828.90px;font-size:15.0px;letter-spacing:0.8px;color:#111;">0.0%</div>
<div class="t" style="left:360.5px;top:828.90px;font-size:15.0px;letter-spacing:0.8px;color:#111;">0.0%</div>
<div class="t" style="left:461px;top:828.90px;font-size:15.0px;letter-spacing:0.72px;color:#111;">1</div>
<div class="t" style="left:562.8px;top:828.90px;font-size:15.0px;letter-spacing:1.1px;color:#111;">0 B</div>
<div class="t" style="left:664.3px;top:828.90px;font-size:15.0px;letter-spacing:1.45px;color:#111;">0.00</div>
<div class="t" style="left:765.3px;top:828.90px;font-size:15.0px;letter-spacing:1.45px;color:#111;">0.00</div>
<div style="position:absolute;left:41px;top:849.32px;width:210px;height:20px;overflow:hidden"><div class="t" style="left:0px;top:-0.20px;font-size:15.0px;letter-spacing:0.72px;color:#111;">Update.ScriptRunDelayedTasks</div></div>
<svg style="position:absolute;left:24px;top:854.32px" width="12" height="13"><path d="M0 0.5 L10.1 6.25 L0 12 Z" fill="#626262"/></svg>
<div class="t" style="left:259.5px;top:849.12px;font-size:15.0px;letter-spacing:0.8px;color:#111;">0.0%</div>
<div class="t" style="left:360.5px;top:849.12px;font-size:15.0px;letter-spacing:0.8px;color:#111;">0.0%</div>
<div class="t" style="left:461px;top:849.12px;font-size:15.0px;letter-spacing:0.72px;color:#111;">1</div>
<div class="t" style="left:562.8px;top:849.12px;font-size:15.0px;letter-spacing:1.1px;color:#111;">0 B</div>
<div class="t" style="left:664.3px;top:849.12px;font-size:15.0px;letter-spacing:1.45px;color:#111;">0.00</div>
<div class="t" style="left:765.3px;top:849.12px;font-size:15.0px;letter-spacing:1.45px;color:#111;">0.00</div>
<div style="position:absolute;left:41px;top:869.54px;width:210px;height:20px;overflow:hidden"><div class="t" style="left:0px;top:-0.20px;font-size:15.0px;letter-spacing:0.72px;color:#111;">RenderTexture.SetActive</div></div>
<div class="t" style="left:259.5px;top:869.34px;font-size:15.0px;letter-spacing:0.8px;color:#111;">0.0%</div>
<div class="t" style="left:360.5px;top:869.34px;font-size:15.0px;letter-spacing:0.8px;color:#111;">0.0%</div>
<div class="t" style="left:461px;top:869.34px;font-size:15.0px;letter-spacing:0.72px;color:#111;">1</div>
<div class="t" style="left:562.8px;top:869.34px;font-size:15.0px;letter-spacing:1.1px;color:#111;">0 B</div>
<div class="t" style="left:664.3px;top:869.34px;font-size:15.0px;letter-spacing:1.45px;color:#111;">0.00</div>
<div class="t" style="left:765.3px;top:869.34px;font-size:15.0px;letter-spacing:1.45px;color:#111;">0.00</div>
<div style="position:absolute;left:41px;top:889.76px;width:210px;height:20px;overflow:hidden"><div class="t" style="left:0px;top:-0.20px;font-size:15.0px;letter-spacing:0.72px;color:#111;">FixedUpdate.NewInputFixedUpdate</div></div>
<svg style="position:absolute;left:24px;top:894.76px" width="12" height="13"><path d="M0 0.5 L10.1 6.25 L0 12 Z" fill="#626262"/></svg>
<div class="t" style="left:259.5px;top:889.56px;font-size:15.0px;letter-spacing:0.8px;color:#111;">0.0%</div>
<div class="t" style="left:360.5px;top:889.56px;font-size:15.0px;letter-spacing:0.8px;color:#111;">0.0%</div>
<div class="t" style="left:461px;top:889.56px;font-size:15.0px;letter-spacing:0.72px;color:#111;">1</div>
<div class="t" style="left:562.8px;top:889.56px;font-size:15.0px;letter-spacing:1.1px;color:#111;">0 B</div>
<div class="t" style="left:664.3px;top:889.56px;font-size:15.0px;letter-spacing:1.45px;color:#111;">0.00</div>
<div class="t" style="left:765.3px;top:889.56px;font-size:15.0px;letter-spacing:1.45px;color:#111;">0.00</div>
<div style="position:absolute;left:41px;top:909.98px;width:210px;height:20px;overflow:hidden"><div class="t" style="left:0px;top:-0.20px;font-size:15.0px;letter-spacing:0.72px;color:#111;">UnityEngine.CoreModule.dll!Unity</div></div>
<svg style="position:absolute;left:24px;top:914.98px" width="12" height="13"><path d="M0 0.5 L10.1 6.25 L0 12 Z" fill="#626262"/></svg>
<div class="t" style="left:259.5px;top:909.78px;font-size:15.0px;letter-spacing:0.8px;color:#111;">0.0%</div>
<div class="t" style="left:360.5px;top:909.78px;font-size:15.0px;letter-spacing:0.8px;color:#111;">0.0%</div>
<div class="t" style="left:461px;top:909.78px;font-size:15.0px;letter-spacing:0.72px;color:#111;">1</div>
<div class="t" style="left:562.8px;top:909.78px;font-size:15.0px;letter-spacing:1.1px;color:#111;">0 B</div>
<div class="t" style="left:664.3px;top:909.78px;font-size:15.0px;letter-spacing:1.45px;color:#111;">0.00</div>
<div class="t" style="left:765.3px;top:909.78px;font-size:15.0px;letter-spacing:1.45px;color:#111;">0.00</div>
<div style="position:absolute;left:41px;top:930.20px;width:210px;height:20px;overflow:hidden"><div class="t" style="left:0px;top:-0.20px;font-size:15.0px;letter-spacing:0.72px;color:#111;">PostLateUpdate.MemoryFrameMaintenance</div></div>
<div class="t" style="left:259.5px;top:930.00px;font-size:15.0px;letter-spacing:0.8px;color:#111;">0.0%</div>
<div class="t" style="left:360.5px;top:930.00px;font-size:15.0px;letter-spacing:0.8px;color:#111;">0.0%</div>
<div class="t" style="left:461px;top:930.00px;font-size:15.0px;letter-spacing:0.72px;color:#111;">1</div>
<div class="t" style="left:562.8px;top:930.00px;font-size:15.0px;letter-spacing:1.1px;color:#111;">0 B</div>
<div class="t" style="left:664.3px;top:930.00px;font-size:15.0px;letter-spacing:1.45px;color:#111;">0.00</div>
<div class="t" style="left:765.3px;top:930.00px;font-size:15.0px;letter-spacing:1.45px;color:#111;">0.00</div>
<div style="position:absolute;left:41px;top:950.42px;width:210px;height:20px;overflow:hidden"><div class="t" style="left:0px;top:-0.20px;font-size:15.0px;letter-spacing:0.72px;color:#111;">EarlyUpdate.PlayerCleanupCachedData</div></div>
<svg style="position:absolute;left:24px;top:955.42px" width="12" height="13"><path d="M0 0.5 L10.1 6.25 L0 12 Z" fill="#626262"/></svg>
<div class="t" style="left:259.5px;top:950.22px;font-size:15.0px;letter-spacing:0.8px;color:#111;">0.0%</div>
<div class="t" style="left:360.5px;top:950.22px;font-size:15.0px;letter-spacing:0.8px;color:#111;">0.0%</div>
<div class="t" style="left:461px;top:950.22px;font-size:15.0px;letter-spacing:0.72px;color:#111;">1</div>
<div class="t" style="left:562.8px;top:950.22px;font-size:15.0px;letter-spacing:1.1px;color:#111;">0 B</div>
<div class="t" style="left:664.3px;top:950.22px;font-size:15.0px;letter-spacing:1.45px;color:#111;">0.00</div>
<div class="t" style="left:765.3px;top:950.22px;font-size:15.0px;letter-spacing:1.45px;color:#111;">0.00</div>
<div style="position:absolute;left:41px;top:970.64px;width:210px;height:20px;overflow:hidden"><div class="t" style="left:0px;top:-0.20px;font-size:15.0px;letter-spacing:0.72px;color:#111;">PreLateUpdate.ParticleSystemBeginUpdateAll</div></div>
<svg style="position:absolute;left:24px;top:975.64px" width="12" height="13"><path d="M0 0.5 L10.1 6.25 L0 12 Z" fill="#626262"/></svg>
<div class="t" style="left:259.5px;top:970.44px;font-size:15.0px;letter-spacing:0.8px;color:#111;">0.0%</div>
<div class="t" style="left:360.5px;top:970.44px;font-size:15.0px;letter-spacing:0.8px;color:#111;">0.0%</div>
<div class="t" style="left:461px;top:970.44px;font-size:15.0px;letter-spacing:0.72px;color:#111;">1</div>
<div class="t" style="left:562.8px;top:970.44px;font-size:15.0px;letter-spacing:1.1px;color:#111;">0 B</div>
<div class="t" style="left:664.3px;top:970.44px;font-size:15.0px;letter-spacing:1.45px;color:#111;">0.00</div>
<div class="t" style="left:765.3px;top:970.44px;font-size:15.0px;letter-spacing:1.45px;color:#111;">0.00</div>
<div style="position:absolute;left:41px;top:990.86px;width:210px;height:20px;overflow:hidden"><div class="t" style="left:0px;top:-0.20px;font-size:15.0px;letter-spacing:0.72px;color:#111;">UnityEngine.CoreModule.dll!Unity</div></div>
<div class="t" style="left:259.5px;top:990.66px;font-size:15.0px;letter-spacing:0.8px;color:#111;">0.0%</div>
<div class="t" style="left:360.5px;top:990.66px;font-size:15.0px;letter-spacing:0.8px;color:#111;">0.0%</div>
<div class="t" style="left:461px;top:990.66px;font-size:15.0px;letter-spacing:0.72px;color:#111;">3</div>
<div class="t" style="left:562.8px;top:990.66px;font-size:15.0px;letter-spacing:1.1px;color:#111;">0 B</div>
<div class="t" style="left:664.3px;top:990.66px;font-size:15.0px;letter-spacing:1.45px;color:#111;">0.00</div>
<div class="t" style="left:765.3px;top:990.66px;font-size:15.0px;letter-spacing:1.45px;color:#111;">0.00</div>
<div style="position:absolute;left:41px;top:1011.08px;width:210px;height:20px;overflow:hidden"><div class="t" style="left:0px;top:-0.20px;font-size:15.0px;letter-spacing:0.72px;color:#111;">PostLateUpdate.PlayerUpdateCanvases</div></div>
<svg style="position:absolute;left:24px;top:1016.08px" width="12" height="13"><path d="M0 0.5 L10.1 6.25 L0 12 Z" fill="#626262"/></svg>
<div class="t" style="left:259.5px;top:1010.88px;font-size:15.0px;letter-spacing:0.8px;color:#111;">0.0%</div>
<div class="t" style="left:360.5px;top:1010.88px;font-size:15.0px;letter-spacing:0.8px;color:#111;">0.0%</div>
<div class="t" style="left:461px;top:1010.88px;font-size:15.0px;letter-spacing:0.72px;color:#111;">1</div>
<div class="t" style="left:562.8px;top:1010.88px;font-size:15.0px;letter-spacing:1.1px;color:#111;">0 B</div>
<div class="t" style="left:664.3px;top:1010.88px;font-size:15.0px;letter-spacing:1.45px;color:#111;">0.00</div>
<div class="t" style="left:765.3px;top:1010.88px;font-size:15.0px;letter-spacing:1.45px;color:#111;">0.00</div>
<div style="position:absolute;left:41px;top:1031.30px;width:210px;height:20px;overflow:hidden"><div class="t" style="left:0px;top:-0.20px;font-size:15.0px;letter-spacing:0.72px;color:#111;">PreUpdate.NewInputUpdate</div></div>
<svg style="position:absolute;left:24px;top:1036.30px" width="12" height="13"><path d="M0 0.5 L10.1 6.25 L0 12 Z" fill="#626262"/></svg>
<div class="t" style="left:259.5px;top:1031.10px;font-size:15.0px;letter-spacing:0.8px;color:#111;">0.0%</div>
<div class="t" style="left:360.5px;top:1031.10px;font-size:15.0px;letter-spacing:0.8px;color:#111;">0.0%</div>
<div class="t" style="left:461px;top:1031.10px;font-size:15.0px;letter-spacing:0.72px;color:#111;">1</div>
<div class="t" style="left:562.8px;top:1031.10px;font-size:15.0px;letter-spacing:1.1px;color:#111;">0 B</div>
<div class="t" style="left:664.3px;top:1031.10px;font-size:15.0px;letter-spacing:1.45px;color:#111;">0.00</div>
<div class="t" style="left:765.3px;top:1031.10px;font-size:15.0px;letter-spacing:1.45px;color:#111;">0.00</div>
<div style="position:absolute;left:41px;top:1051.52px;width:210px;height:20px;overflow:hidden"><div class="t" style="left:0px;top:-0.20px;font-size:15.0px;letter-spacing:0.72px;color:#111;">FixedUpdate.Physics2DFixedUpdate</div></div>
<svg style="position:absolute;left:24px;top:1056.52px" width="12" height="13"><path d="M0 0.5 L10.1 6.25 L0 12 Z" fill="#626262"/></svg>
<div class="t" style="left:259.5px;top:1051.32px;font-size:15.0px;letter-spacing:0.8px;color:#111;">0.0%</div>
<div class="t" style="left:360.5px;top:1051.32px;font-size:15.0px;letter-spacing:0.8px;color:#111;">0.0%</div>
<div class="t" style="left:461px;top:1051.32px;font-size:15.0px;letter-spacing:0.72px;color:#111;">1</div>
<div class="t" style="left:562.8px;top:1051.32px;font-size:15.0px;letter-spacing:1.1px;color:#111;">0 B</div>
<div class="t" style="left:664.3px;top:1051.32px;font-size:15.0px;letter-spacing:1.45px;color:#111;">0.00</div>
<div class="t" style="left:765.3px;top:1051.32px;font-size:15.0px;letter-spacing:1.45px;color:#111;">0.00</div>
<div style="position:absolute;left:41px;top:1071.74px;width:210px;height:20px;overflow:hidden"><div class="t" style="left:0px;top:-0.20px;font-size:15.0px;letter-spacing:0.72px;color:#111;">PreUpdate.AIUpdate</div></div>
<svg style="position:absolute;left:24px;top:1076.74px" width="12" height="13"><path d="M0 0.5 L10.1 6.25 L0 12 Z" fill="#626262"/></svg>
<div class="t" style="left:259.5px;top:1071.54px;font-size:15.0px;letter-spacing:0.8px;color:#111;">0.0%</div>
<div class="t" style="left:360.5px;top:1071.54px;font-size:15.0px;letter-spacing:0.8px;color:#111;">0.0%</div>
<div class="t" style="left:461px;top:1071.54px;font-size:15.0px;letter-spacing:0.72px;color:#111;">1</div>
<div class="t" style="left:562.8px;top:1071.54px;font-size:15.0px;letter-spacing:1.1px;color:#111;">0 B</div>
<div class="t" style="left:664.3px;top:1071.54px;font-size:15.0px;letter-spacing:1.45px;color:#111;">0.00</div>
<div class="t" style="left:765.3px;top:1071.54px;font-size:15.0px;letter-spacing:1.45px;color:#111;">0.00</div>
<div style="position:absolute;left:41px;top:1091.96px;width:210px;height:20px;overflow:hidden"><div class="t" style="left:0px;top:-0.20px;font-size:15.0px;letter-spacing:0.72px;color:#111;">FrameEvents.OnBeforeRenderCallback</div></div>
<svg style="position:absolute;left:24px;top:1096.96px" width="12" height="13"><path d="M0 0.5 L10.1 6.25 L0 12 Z" fill="#626262"/></svg>
<div class="t" style="left:259.5px;top:1091.76px;font-size:15.0px;letter-spacing:0.8px;color:#111;">0.0%</div>
<div class="t" style="left:360.5px;top:1091.76px;font-size:15.0px;letter-spacing:0.8px;color:#111;">0.0%</div>
<div class="t" style="left:461px;top:1091.76px;font-size:15.0px;letter-spacing:0.72px;color:#111;">1</div>
<div class="t" style="left:562.8px;top:1091.76px;font-size:15.0px;letter-spacing:1.1px;color:#111;">0 B</div>
<div class="t" style="left:664.3px;top:1091.76px;font-size:15.0px;letter-spacing:1.45px;color:#111;">0.00</div>
<div class="t" style="left:765.3px;top:1091.76px;font-size:15.0px;letter-spacing:1.45px;color:#111;">0.00</div>
<div style="position:absolute;left:0;top:1114px;width:1999px;height:1px;background:#555"></div>
</body></html>
